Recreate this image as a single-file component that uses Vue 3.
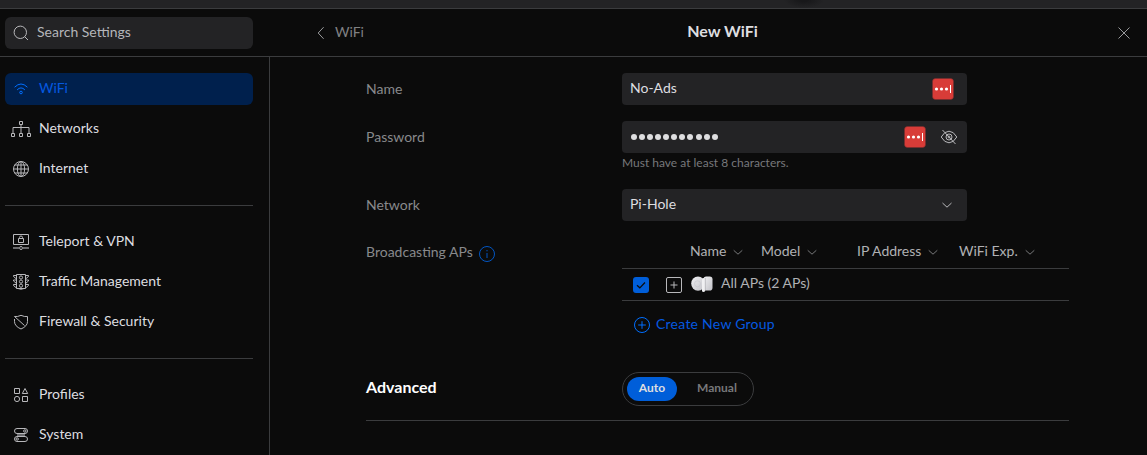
<script setup>
const groups = [
  [
    { id: 'wifi', label: 'WiFi', active: true },
    { id: 'networks', label: 'Networks' },
    { id: 'internet', label: 'Internet' },
  ],
  [
    { id: 'vpn', label: 'Teleport & VPN' },
    { id: 'traffic', label: 'Traffic Management' },
    { id: 'firewall', label: 'Firewall & Security' },
  ],
  [
    { id: 'profiles', label: 'Profiles' },
    { id: 'system', label: 'System' },
  ],
]
const columns = [
  { id: 'name', label: 'Name' },
  { id: 'model', label: 'Model' },
  { id: 'ip', label: 'IP Address' },
  { id: 'exp', label: 'WiFi Exp.' },
]
</script>

<template>
  <div class="app">
    <div class="topbar"><span class="shade"></span></div>
    <header class="header">
      <div class="search">
        <svg class="icon" width="16" height="16" viewBox="0 0 16 16"><circle cx="7.3" cy="7.3" r="6.2" /><path d="M11.7 11.7L15 15" /></svg>
        <span class="search-text">Search Settings</span>
      </div>
      <div class="titlebar">
        <div class="back">
          <svg class="icon" width="8" height="14" viewBox="0 0 8 14"><path d="M6.6 1.2L1.2 7l5.4 5.8" /></svg>
          <span class="back-text">WiFi</span>
        </div>
        <h1 class="title">New WiFi</h1>
        <svg class="icon close" width="14" height="14" viewBox="0 0 14 14"><path d="M1.5 1.5l11 11M12.5 1.5l-11 11" /></svg>
      </div>
    </header>
    <div class="body">
      <nav class="sidebar">
        <div v-for="(group, i) in groups" :key="i" class="group">
          <div v-for="item in group" :key="item.id" class="item" :class="{ active: item.active }">
            <svg class="icon" width="20" height="20" viewBox="0 0 20 20">
              <g v-if="item.id === 'wifi'">
                <path d="M3.6 8.2Q10 1.8 16.4 8.2M6.1 10.9Q10 6.9 13.9 10.9" /><circle cx="10" cy="13.5" r="1.3" />
              </g>
              <g v-else-if="item.id === 'networks'">
                <path d="M8.5 2.5h3v3h-3zM.5 14.5h3v3h-3zM8.5 14.5h3v3h-3zM16.5 14.5h3v3h-3zM10 5.5v9M2 14.5V8.5h16v6" />
              </g>
              <g v-else-if="item.id === 'internet'">
                <circle cx="10" cy="10" r="7.5" /><ellipse cx="10" cy="10" rx="3.6" ry="7.5" /><path d="M10 2.5v15M2.5 10h15M3.7 6h12.6M3.7 14h12.6" />
              </g>
              <g v-else-if="item.id === 'vpn'">
                <path d="M2.5 2.5h15v10h-15zM7.5 6.5h5v4h-5zM8.5 6.5V5.500a1.5 1.5 0 0 1 3 0v1" /><circle cx="10" cy="16" r="1.5" /><path class="dim" d="M2 16h6.5M11.5 16H18" />
              </g>
              <g v-else-if="item.id === 'traffic'">
                <path d="M5.5 2.5h9v14h-9zM7 16.5q3 1.5 6 0M5.5 3.5h-3v1l3 2.5M5.5 8h-3v1l3 2.5M5.5 12.5h-3v1l3 2.5M14.5 3.5h3v1l-3 2.5M14.5 8h3v1l-3 2.5M14.5 12.5h3v1l-3 2.5" />
                <circle cx="10" cy="5.5" r="1.6" /><circle cx="10" cy="9.6" r="1.6" /><circle cx="10" cy="13.7" r="1.6" />
              </g>
              <g v-else-if="item.id === 'firewall'">
                <path d="M10 3.3q3.4 1.7 6.5 1.2v5q0 4.7-6.5 7.5-6.5-2.8-6.5-7.5V7M3.5 4.5q3.1.5 6.5-1.2M3.5 4.5l10 9" />
              </g>
              <g v-else-if="item.id === 'profiles'">
                <path d="M3.5 3.5h5v5h-5zM11.5 11.5h5v5h-5zM14 3.5l2.7 5h-5.4z" /><circle cx="6" cy="14" r="2.6" />
              </g>
              <g v-else>
                <path class="block" d="M6 8h8v4H6z" /><rect x="3.5" y="3.5" width="13" height="5" rx="2.5" /><rect x="3.5" y="11.5" width="13" height="5" rx="2.5" /><circle cx="13.8" cy="6" r="1.2" /><circle cx="6.2" cy="14" r="1.2" />
              </g>
            </svg>
            <span class="item-text">{{ item.label }}</span>
          </div>
        </div>
      </nav>

      <main class="form">
        <div class="row">
          <div class="label">Name</div>
          <div class="input">
            <span class="value">No-Ads</span>
            <svg class="pass name-pass" width="22" height="22" viewBox="0 0 22 22"><rect x=".5" y=".5" width="21" height="21" rx="3" /><circle cx="4.5" cy="11" r="1.6" /><circle cx="9.5" cy="11" r="1.6" /><circle cx="14.5" cy="11" r="1.6" /><path d="M18.5 7v8" /></svg>
          </div>
        </div>
        <div class="row">
          <div class="label">Password</div>
          <div class="control">
            <div class="input">
              <span class="dots"><i v-for="n in 11" :key="n" class="dot"></i></span>
              <svg class="pass" width="22" height="22" viewBox="0 0 22 22"><rect x=".5" y=".5" width="21" height="21" rx="3" /><circle cx="4.5" cy="11" r="1.6" /><circle cx="9.5" cy="11" r="1.6" /><circle cx="14.5" cy="11" r="1.6" /><path d="M18.5 7v8" /></svg>
              <svg class="icon eye" width="18" height="16" viewBox="0 0 18 16"><path d="M1.2 8Q4.5 2.2 9 2.2T16.8 8Q13.5 13.8 9 13.8T1.2 8zM2.5 1l13 14" /><circle cx="9" cy="8" r="3" /><circle cx="9" cy="8" r="1" /></svg>
            </div>
            <div class="hint">Must have at least 8 characters.</div>
          </div>
        </div>
        <div class="row">
          <div class="label">Network</div>
          <div class="input">
            <span class="value">Pi-Hole</span>
            <svg class="icon select-chevron" width="12" height="8" viewBox="0 0 12 8"><path d="M1.5 2L6 6.2 10.5 2" /></svg>
          </div>
        </div>
        <div class="row ap-row">
          <div class="label ap-label">
            <span>Broadcasting APs</span>
            <svg class="info" width="16" height="16" viewBox="0 0 16 16"><circle cx="8" cy="8" r="7.5" /><path d="M8 7v5M8 4v1.3" /></svg>
          </div>
          <div class="table">
            <div class="thead">
              <div v-for="c in columns" :key="c.id" class="th" :class="c.id">
                <span>{{ c.label }}</span>
                <svg class="icon" width="10" height="7" viewBox="0 0 10 7"><path d="M.7 1.3L5 5.2l4.3-3.9" /></svg>
              </div>
            </div>
            <div class="tr">
              <span class="check"><svg width="16" height="16" viewBox="0 0 16 16"><path d="M4 8.200l2.8 2.6L12 5.5" /></svg></span>
              <svg class="icon plus" width="16" height="16" viewBox="0 0 16 16"><rect x=".5" y=".5" width="15" height="15" rx="1.5" /><path d="M8 4.5v7M4.5 8h7" /></svg>
              <svg class="devices" width="22" height="16" viewBox="0 0 22 16">
                <defs>
                  <linearGradient id="ap-shell" x1="0" y1="0" x2="1" y2="1">
                    <stop offset="0" stop-color="#f0f0f2" /><stop offset="1" stop-color="#c2c2c8" />
                  </linearGradient>
                </defs>
                <rect class="ap-shell" x="12.500" y=".5" width="9" height="14" rx="2.800" />
                <ellipse class="ap-shell" cx="7" cy="7.600" rx="6.800" ry="7.200" />
                <circle class="ap-ring" cx="6.500" cy="7.800" r="3" />
                <rect class="ap-front" x="11" y="2" width="3" height="14" rx="1.500" />
                <path class="ap-edge" d="M14.300 2v12.500" />
              </svg>
              <span class="ap-name">All APs (2 APs)</span>
            </div>
            <div class="create">
              <svg class="info" width="16" height="16" viewBox="0 0 16 16"><circle cx="8" cy="8" r="7.5" /><path d="M8 4.2v7.6M4.2 8h7.6" /></svg>
              <span class="create-text">Create New Group</span>
            </div>
          </div>
        </div>
        <div class="advanced">
          <div class="adv-label">Advanced</div>
          <div class="toggle">
            <span class="opt on">Auto</span>
            <span class="opt">Manual</span>
          </div>
        </div>
      </main>
    </div>
  </div>
</template>

<style>
body {
  background: #0b0b0b;
  overflow: hidden;
}
</style>

<style scoped>
.app {
  height: 455px;
  display: flex;
  flex-direction: column;
  overflow: hidden;
  background: #0b0b0b;
  color: #dedee0;
  font: 14px/20px Lato, sans-serif;
}
.app * { box-sizing: border-box; }
svg { flex: none; display: block; }
.icon { fill: none; stroke: #b8b8bb; stroke-width: 1; }
.topbar {
  flex: none;
  height: 9px;
  background: #232325;
  border-bottom: 1px solid #3b3c3e;
  overflow: hidden;
}
.shade {
  display: block;
  width: 40px;
  height: 8px;
  margin-left: 784px;
  background: radial-gradient(ellipse 20px 8px at 50% 0, #18181a 20%, #232325 100%);
}
.header {
  flex: none;
  height: 48px;
  display: flex;
  align-items: center;
  border-bottom: 1px solid #3b3c3e;
}
.search {
  width: 248px;
  height: 32px;
  margin: 1px 0 0 5px;
  padding-left: 8px;
  display: flex;
  align-items: center;
  gap: 8px;
  border-radius: 6px;
  background: #232325;
  color: #b4b5b9;
}
.search-text, .item-text, .back-text, .value { margin-top: -2px; }
.titlebar {
  flex: 1;
  margin-left: 16px;
  padding: 0 16px 0 48px;
  display: grid;
  grid-template-columns: 1fr auto 1fr;
  align-items: center;
}
.back { display: flex; align-items: center; gap: 10px; color: #808183; }
.back .icon { stroke: #9a9b9d; }
.title { margin: -3px 0 0 -3px; font-size: 16px; font-weight: 700; line-height: 20px; }
.close { justify-self: end; margin-top: 1px; stroke: #98999b; }
.body { flex: 1; display: flex; min-height: 0; }
.sidebar {
  width: 270px;
  padding: 16px 16px 0 5px;
  border-right: 1px solid #3b3c3e;
}
.group { display: flex; flex-direction: column; gap: 8px; }
.group + .group { margin-top: 20px; padding-top: 20px; border-top: 1px solid #3b3c3e; }
.item {
  height: 32px;
  padding-left: 6px;
  display: flex;
  align-items: center;
  gap: 8px;
  border-radius: 6px;
}
.active { background: #00204d; color: #0559e0; }
.active .icon { stroke: #006fff; }
.dim { stroke: #69696c; stroke-width: 2; }
.block { fill: #69696c; stroke: none; }
.form { width: 799px; padding: 16px 0 0 96px; }
.row { display: flex; margin-bottom: 16px; }
.label { width: 256px; padding-top: 6px; color: #88898b; }
.input {
  width: 345px;
  height: 32px;
  padding: 0 8px;
  display: flex;
  align-items: center;
  border-radius: 4px;
  background: #232325;
}
.pass { margin-left: auto; fill: #fff; stroke: none; }
.pass rect { fill: #d83c38; stroke: #792d2d; stroke-width: .5; }
.pass path { stroke: #fff; stroke-width: 1; }
.name-pass { margin-right: 5px; }
.eye { margin-left: 14px; margin-right: 1px; }
.select-chevron { margin: 0 6px 0 auto; }
.dots { display: flex; gap: 2.1px; margin-left: .8px; }
.dot { width: 6px; height: 6px; border-radius: 50%; background: #dedee0; }
.hint { height: 20px; font-size: 12px; line-height: 20px; color: #77787b; }
.ap-row { margin-bottom: 0; }
.ap-label { display: flex; gap: 6px; padding-top: 5px; align-items: flex-start; }
.info { fill: none; stroke: #006fff; stroke-width: 1; }
.ap-label .info { margin-top: 4px; opacity: .75; }
.table { width: 447px; padding-top: 1px; }
.thead {
  height: 31px;
  display: grid;
  grid-template-columns: 71px 96px 102px 1fr;
  padding: 3px 0 0 68px;
  border-bottom: 1px solid #3b3c3e;
  color: #b0b1b4;
}
.th { display: flex; gap: 7px; align-items: flex-start; }
.th .icon { margin-top: 8px; stroke: #77787a; }
.tr {
  height: 32px;
  display: flex;
  align-items: center;
  padding-left: 11px;
  border-bottom: 1px solid #3b3c3e;
  color: #b0b1b4;
}
.check { margin-top: 1px; border-radius: 3px; background: #005ed9; }
.check path { fill: none; stroke: #0b0b0b; stroke-width: 1.2; }
.plus { margin: 1px 0 0 17px; }
.devices { margin-left: 9px; margin-top: -1px; }
.ap-shell { fill: url(#ap-shell); }
.ap-ring { fill: none; stroke: #c6c6cc; stroke-width: .6; }
.ap-front { fill: #f0f0f2; }
.ap-edge { fill: none; stroke: #a4a4aa; stroke-width: .6; }
.ap-name { margin: -3px 0 0 8px; }
.create { display: flex; align-items: center; margin: 15px 0 0 12px; gap: 6px; height: 18px; color: #0559e0; }
.create-text { margin-top: -2px; letter-spacing: .25px; }
.advanced {
  height: 49px;
  margin-top: 38px;
  display: flex;
  border-bottom: 1px solid #3b3c3e;
}
.adv-label { width: 256px; padding-top: 5px; font-size: 16px; font-weight: 700; color: #fff; }
.toggle {
  width: 132px;
  height: 34px;
  padding: 4px;
  display: flex;
  border: 1px solid #3b3c3e;
  border-radius: 17px;
  font-size: 12px;
  font-weight: 700;
  line-height: 22px;
  color: #77787a;
}
.opt { flex: none; height: 24px; padding-left: 20px; border-radius: 12px; }
.on { width: 50px; padding: 0; text-align: center; background: #005ed9; color: #dedee0; }
</style>
